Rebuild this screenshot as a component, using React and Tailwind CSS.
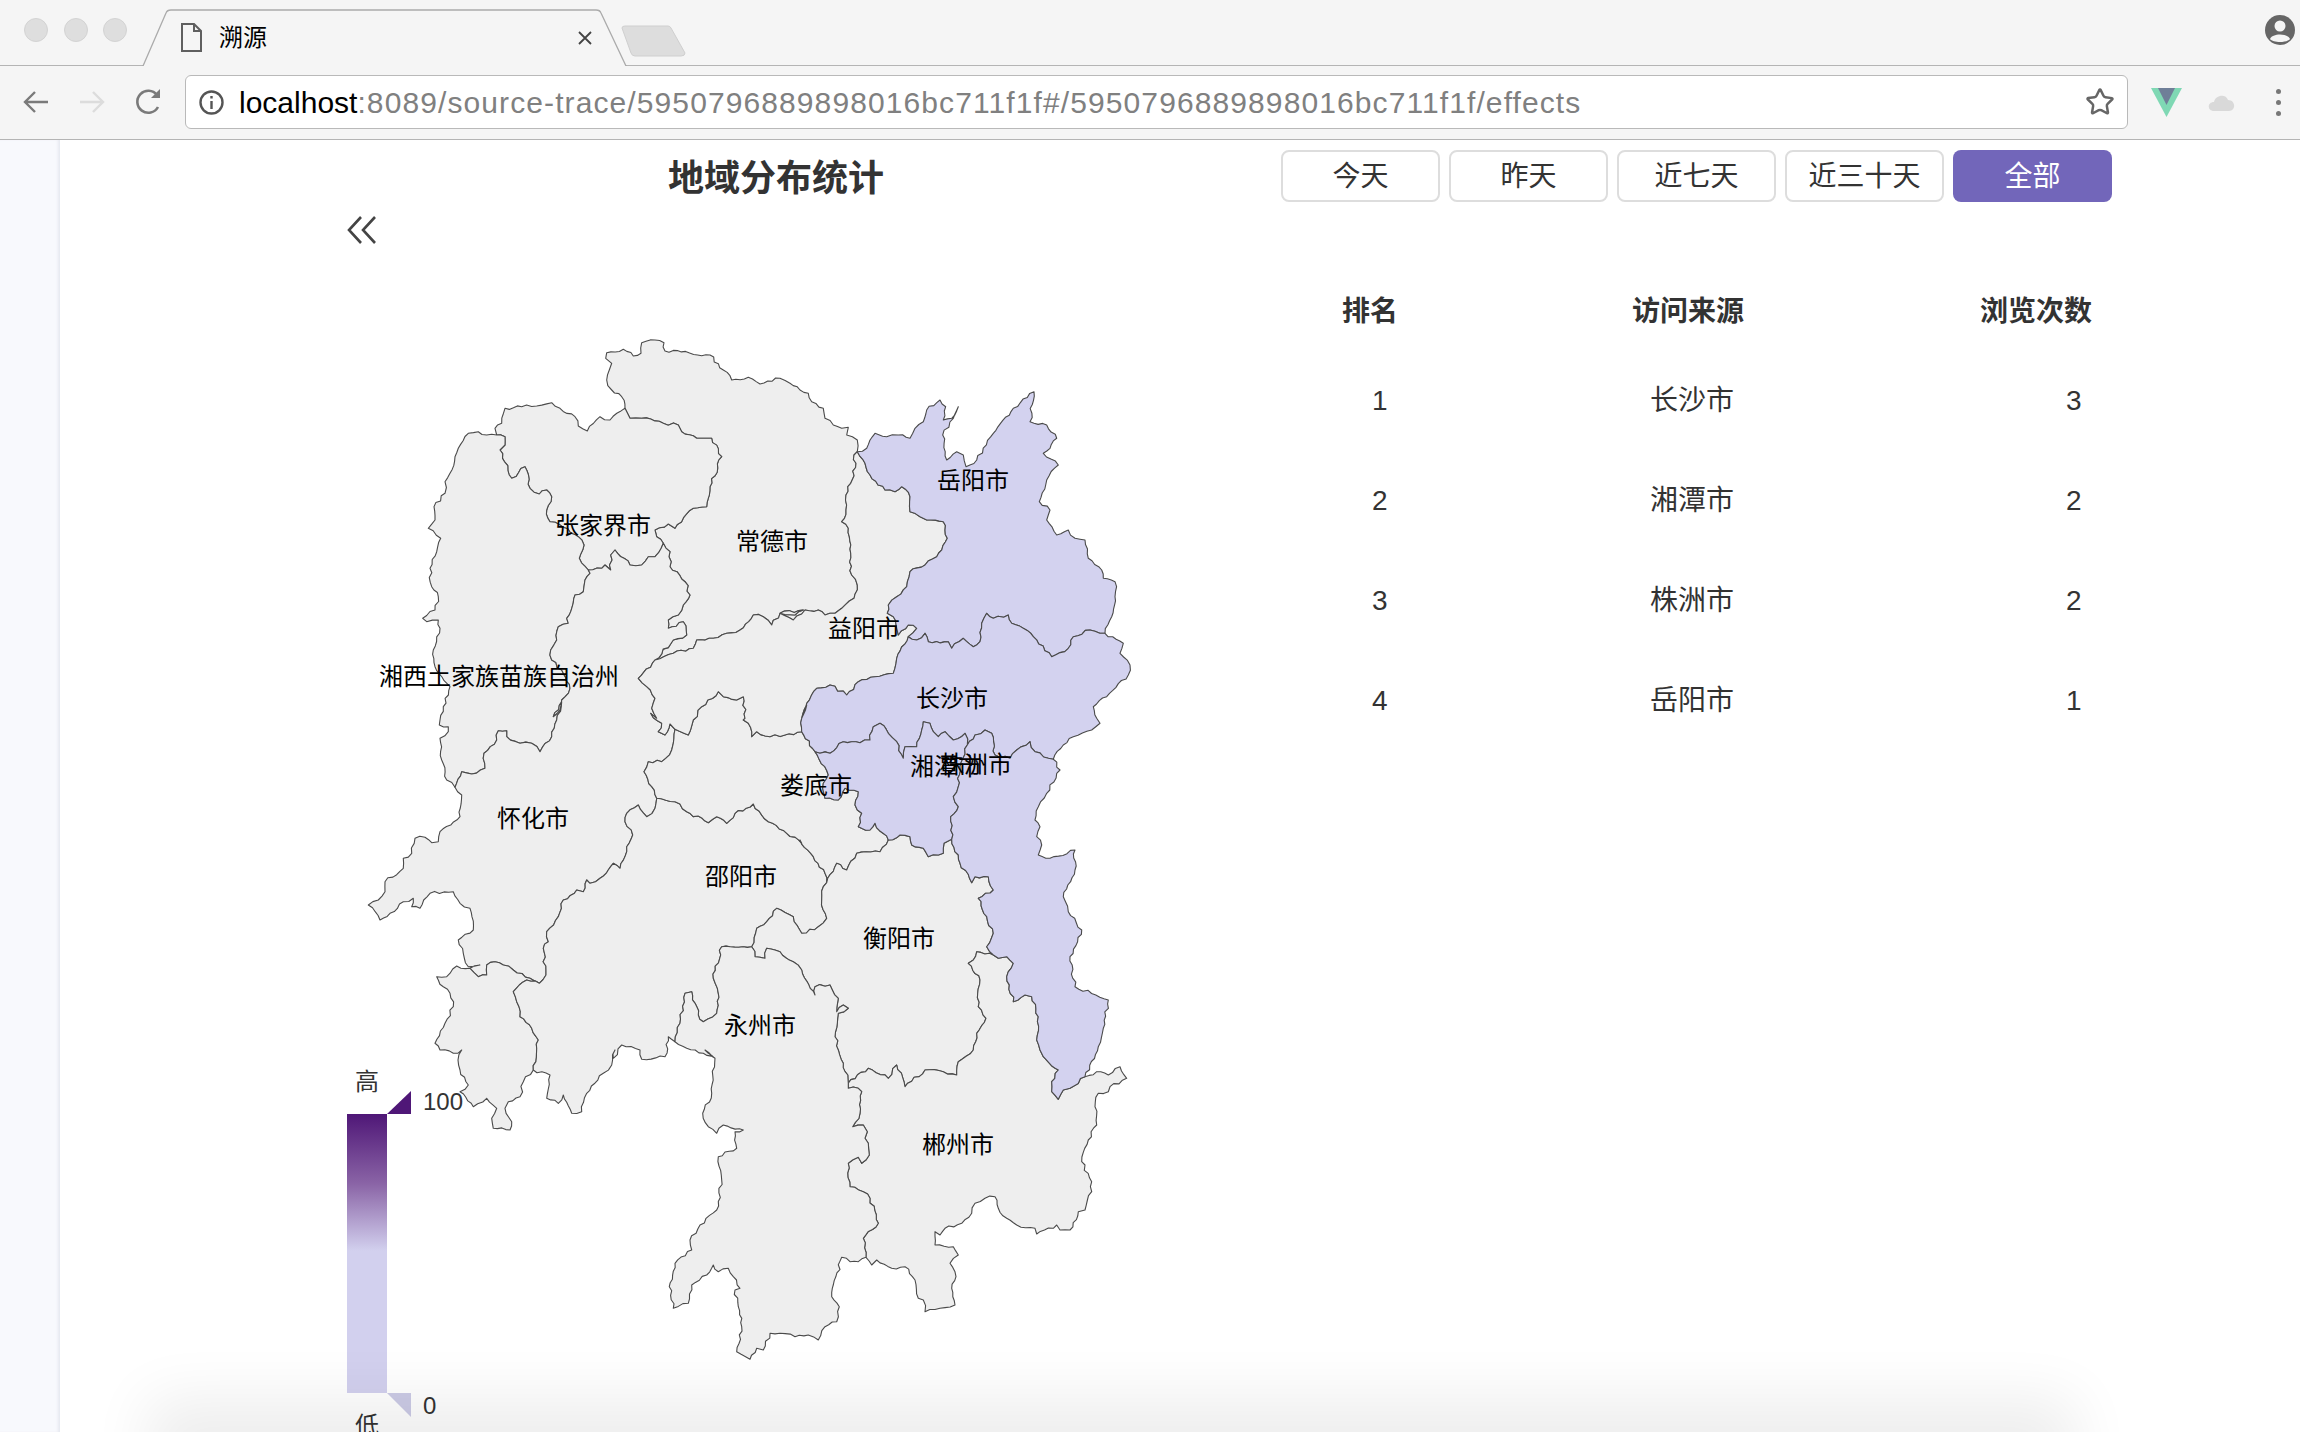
import { Star } from 'lucide-react'

// tile helpers: trace points were read off zoomed crops (3x) of the map
const tile = (ox, oy) => (s) =>
  s.trim().split(/\s+/).map((v) => {
    const [x, y] = v.split(',').map(Number)
    return [ox + x / 3, oy + y / 3]
  })
const A = tile(340, 320)
const Y = tile(780, 320)
const C = tile(340, 700)
const S = tile(780, 700)
const E = tile(780, 1050)
const L = tile(320, 1050)

const traced = {
  changdeOuter: [
    ...A('855,265 845,230 815,210 800,180 808,150 815,130 797,115 800,98 850,88 880,108 903,100 905,68 945,60 972,68 975,93 1110,105 1150,150 1175,180 1225,172 1260,192 1320,175'),
    ...Y('30,190 60,210 85,220 95,245 130,265 135,295 160,315 185,325 205,322 200,345 232,360 232,395'),
  ],
  changdeYiyang: [
    ...Y('232,395 222,405 228,430 212,490 198,525 198,570 185,605 205,625 212,700 215,765 232,795 222,835 185,865 165,880 135,885 115,870 75,870 40,900 0,880'),
    ...A('1390,870 1365,885 1320,880 1295,915 1270,890 1240,885 1200,930 1160,940 1120,955 1070,960 1060,985 1000,1000 945,1020'),
  ],
  changdeHuaihua: A('945,1020 1000,960 1040,945 1030,905 985,925 985,900 1015,885 1030,855 1050,825 1035,785 990,740 990,695 970,670'),
  zjjChangde: A('970,670 950,650 945,630 985,612 1005,625 1060,565 1100,560 1110,500 1145,410 1115,355 1070,355 1025,335 1015,315 970,310 905,295 870,295 855,265'),
  zjjNorth: A('855,265 810,300 780,290 742,333 715,318 705,290 660,265 635,248 590,258 545,260 495,265 485,310 465,325 470,345'),
  zjjXiangxi: A('470,345 495,350 495,375 480,390 515,475 555,440 570,505 598,522 620,510 635,530 620,570 630,605 660,615 715,650 732,675 718,715 745,750'),
  zjjHuaihua: A('745,750 785,745 795,735 812,750 812,705 825,690 870,735 905,735 925,710 945,710 970,670'),
  xxOuter: [
    ...A('470,345 440,345 415,335 385,340 355,385 345,410 330,460 315,485 315,520 282,560 285,600 265,625 302,655 290,695 270,745 275,800 295,830 285,870 248,895 260,905 295,900 300,925 280,990 285,1040 330,1100 310,1160'),
    ...C('300,60 298,75 325,80 325,95 300,115 305,180 320,240 345,262'),
  ],
  xxHuaihua: [
    ...C('345,262 365,215 395,222 435,205 432,160 470,120 475,92 500,92 500,110 540,130 575,130 600,155 635,110 650,60 665,5'),
    ...A('640,1190 660,1170 665,1140 690,1105 665,1050 635,1020 632,990 650,960 655,920 685,910 680,895 705,825 730,815 735,780 750,760 745,750'),
  ],
  yiHuai: [
    ...A('945,1020 895,1075 920,1100 945,1135 935,1165 950,1195'),
    ...C('932,40 965,70 955,95 975,105 990,72 1005,88'),
  ],
  huaiLoudi: C('1005,88 1000,130 995,150 965,185 925,185 912,215 935,260 950,295'),
  huaiShao: C('950,295 945,325 920,350 895,315 860,340 855,365 878,405 860,440 840,505 820,490 780,535 750,550 740,540 730,575 710,570 670,600 655,650 620,695 625,725 610,745 618,825 598,850'),
  huaiSw: C('598,850 570,835 520,810 490,795 465,785 440,795 440,825 415,830 390,805'),
  huaiOuter: C('390,805 420,795 385,800 370,760 355,720 400,690 390,625 360,610 340,575 270,580 240,625 215,620 220,595 190,605 150,640 120,660 85,615 115,600 135,575 135,545 190,505 190,475 215,460 225,415 255,412 275,428 295,425 300,395 360,350 365,285 345,262'),
  swOuter: [
    ...C('390,805 350,798 320,830 290,830 310,860 330,880 340,920 315,970 285,1030 300,1050 340,1060 365,1050 354,1080 360,1110 385,1155'),
    ...L('420,125 460,170 500,145 530,175 515,205 520,235 570,240 575,215 555,175 565,155 600,140 610,95 640,60'),
  ],
  swShao: [
    ...C('598,850 560,840 520,875 530,905 540,950 575,985 595,1020'),
    ...L('640,60'),
  ],
  shaoSouth: [
    ...L('640,60 690,75 680,145 715,160 730,135 755,190 785,185 800,130 850,70 875,45 885,0'),
    ...C('820,1075 845,1035 900,1050 905,1078 975,1070 985,1010 1005,1025'),
  ],
  shaoYong: C('1005,1025 1020,970 1035,880 1055,875 1075,945 1090,965 1130,940 1135,880 1120,835 1145,740 1235,740'),
  shaoHeng: [
    ...C('1235,740 1250,685 1280,665 1310,625 1360,650 1385,700'),
    ...S('115,680 140,655 125,600 130,560 140,548'),
  ],
  shaoLoudi: [
    ...C('950,295 1005,305 1040,335 1105,368 1130,350 1160,370 1185,340 1240,312 1285,365 1340,400 1385,430'),
    ...S('60,420 100,470 135,520 140,548'),
  ],
  loudiHeng: S('140,548 170,490 200,510 230,460 300,455 325,420'),
  loudiXt: S('325,420 285,370 270,390 235,380 245,340 225,315 235,275 195,265 175,300 135,295 130,250 145,225 105,155'),
  loudiCs: S('105,155 65,95'),
  loudiYi: [
    ...C('1005,88 1045,105 1060,60 1085,20'),
    ...A('1135,1115 1150,1130 1190,1140 1210,1130 1215,1195'),
    ...C('1210,60 1225,70 1235,110 1250,95 1290,110 1335,105'),
    ...S('65,95'),
  ],
  csYi: [
    ...S('65,95 65,55 80,15'),
    ...Y('65,1195 80,1150 110,1105 150,1095 200,1125 235,1085 285,1070 340,1060 350,1015 385,950'),
  ],
  yyYi: Y('232,395 255,430 270,465 315,510 345,515 365,500 390,530 390,575 420,590 440,600 490,605 502,655 470,710 435,735 390,755 380,800 350,830 325,855 322,880 340,890 350,925 355,945 385,915 410,925 385,950'),
  yyOuter: Y('232,395 260,385 285,340 320,350 355,345 390,355 405,325 430,305 440,270 480,240 497,260 490,300 515,295 535,260 520,295 488,345 500,420 530,395 550,405 558,440 590,420 640,340 700,265 762,215 750,305 800,315 830,355 810,385 790,400 835,435 800,480 778,545 810,570 800,600 830,645 865,630 885,655 915,660 925,715 965,750 970,775 1005,785 1005,830 995,890 975,940'),
  yyCs: Y('385,950 410,960 435,940 445,965 505,965 515,985 550,955 580,980 600,965 605,910 620,880 640,895 685,885 695,910 730,925 760,950 815,1010 865,985 880,950 930,930 975,940'),
  csOuter: [
    ...Y('975,940 1030,970 1020,1000 1050,1035 1045,1065 980,1130 940,1160 950,1195'),
    ...S('960,70 935,90 880,110 850,135 820,178'),
  ],
  csZz: S('820,178 765,155 750,125 710,150 690,175 645,165 635,100 615,90 585,105 562,135'),
  csXt: S('105,155 150,160 190,125 240,128 270,120 280,80 300,70 325,100 350,125 370,175 375,140 410,140 425,90 430,65 450,70 460,95 475,110 495,95 520,120 555,100 562,135'),
  xtZz: S('562,135 540,200 535,260 520,290 535,320 512,350 515,418'),
  xtHeng: S('325,420 360,405 390,410 395,435 430,445 445,470 490,460 492,430 515,418'),
  zzHeng: S('515,418 540,490 575,548 585,530 625,530 640,570 595,595 620,650 640,700 620,740 640,765'),
  zzOuter: [
    ...S('820,178 840,210 800,280 775,320 765,360 780,380 770,410 785,435 775,465 810,475 885,450 885,510 850,590 865,635 905,690 870,770 885,860 985,900 970,985 955,1040'),
    ...E('915,80'),
  ],
  zzCz: [
    ...E('915,80 870,115 850,120 835,148 815,125 815,95 835,60 790,20 780,0'),
    ...S('770,1020 775,950 755,890 735,885 700,905 680,830 700,790 680,770 655,775 640,765'),
  ],
  hengCz: S('640,765 590,755 580,780 565,790 600,840 595,920 618,955 590,1000 580,1050 535,1085 530,1125 490,1115 435,1110 375,1160 350,1095 325,1135 265,1105 205,1150'),
  hengYong: [
    ...S('205,1150 190,1090 165,1010 175,940 205,925 190,915 170,935 175,895 150,855 105,860 105,885'),
    ...C('1385,810 1360,785 1320,755 1305,750 1280,745 1275,775 1245,770 1235,740'),
  ],
  czOuter: E('915,80 950,65 985,75 1020,50 1040,85 990,110 985,125 955,130 945,170 950,225 925,270 905,335 935,395 935,425 915,480 895,485 870,540 840,540 830,525 770,552 765,535 710,525 680,505 655,475 645,440 615,445 585,460 575,490 545,520 495,535 480,555 465,545 465,585 520,590 535,615 510,640 528,680 515,715 525,765 480,775 435,785 430,750 415,745 405,690 375,650 335,655 290,630 275,645 258,622'),
  czYong: E('258,622 250,565 295,520 270,445 250,425 210,410 205,340 235,322 245,340 268,315 265,280 255,265 262,245 250,225 218,230 240,190 245,125 235,115 205,115 205,100'),
  yongOuter: [
    ...E('258,622 235,635 210,635 185,622 155,740 178,770 170,815 135,830 115,870 85,855 45,860 0,850'),
    ...L('1350,850 1330,900 1310,895 1290,928 1250,905 1265,830 1255,770 1245,720 1260,715 1240,680 1225,655 1195,665 1180,645 1160,675 1115,705 1105,760 1060,775 1048,710 1065,640 1115,600 1110,570 1140,525 1190,480 1205,390 1195,320 1250,295 1245,245 1270,240 1210,225 1190,250 1165,230 1148,190 1175,130 1185,25 1155,0'),
    ...C('1125,1075 1090,1060 1040,1045 1005,1025'),
  ],
}

// the real borders are wigglier than the trace, so break long edges up a little
const noise = (x, y) => {
  const v = Math.sin(x * 12.9898 + y * 78.233) * 43758.5453
  return (v - Math.floor(v)) * 2 - 1
}
const roughen = (pts) => {
  const out = [pts[0]]
  for (let i = 1; i < pts.length; i++) {
    const [x0, y0] = pts[i - 1]
    const [x1, y1] = pts[i]
    const len = Math.hypot(x1 - x0, y1 - y0)
    const steps = Math.floor(len / 4)
    for (let k = 1; k < steps; k++) {
      const t = k / steps
      const x = x0 + (x1 - x0) * t
      const y = y0 + (y1 - y0) * t
      const n = noise(x, y) * 1.6
      out.push([x - ((y1 - y0) / len) * n, y + ((x1 - x0) / len) * n])
    }
    out.push(pts[i])
  }
  return out
}
const b = Object.fromEntries(Object.entries(traced).map(([k, v]) => [k, roughen(v)]))

const r = (pts) => [...pts].reverse()
const loop = (...parts) => 'M' + parts.flat().map(([x, y]) => `${x.toFixed(1)} ${y.toFixed(1)}`).join('L') + 'Z'

const regions = [
  { fill: false, d: loop(b.changdeOuter, b.changdeYiyang, b.changdeHuaihua, b.zjjChangde) },
  { fill: false, d: loop(b.zjjNorth, b.zjjXiangxi, b.zjjHuaihua, b.zjjChangde) },
  { fill: false, d: loop(b.xxOuter, b.xxHuaihua, r(b.zjjXiangxi)) },
  { fill: false, d: loop(b.zjjHuaihua, r(b.changdeHuaihua), b.yiHuai, b.huaiLoudi, b.huaiShao, b.huaiSw, b.huaiOuter, b.xxHuaihua) },
  { fill: false, d: loop(r(b.huaiSw), b.swShao, r(b.swOuter)) },
  { fill: false, d: loop(b.huaiShao, b.swShao, b.shaoSouth, b.shaoYong, b.shaoHeng, r(b.shaoLoudi)) },
  { fill: false, d: loop(b.huaiLoudi, b.shaoLoudi, b.loudiHeng, b.loudiXt, b.loudiCs, r(b.loudiYi)) },
  { fill: false, d: loop(b.changdeYiyang, b.yiHuai, b.loudiYi, b.csYi, r(b.yyYi)) },
  { fill: false, d: loop(b.loudiHeng, b.xtHeng, b.zzHeng, b.hengCz, b.hengYong, b.shaoHeng) },
  { fill: false, d: loop(b.czOuter, b.czYong, r(b.hengCz), r(b.zzCz)) },
  { fill: false, d: loop(b.shaoYong, r(b.hengYong), r(b.czYong), b.yongOuter) },
  { fill: true, d: loop(b.yyOuter, r(b.yyCs), r(b.yyYi)) },
  { fill: true, d: loop(b.yyCs, b.csOuter, b.csZz, r(b.csXt), b.loudiCs, b.csYi) },
  { fill: true, d: loop(b.csXt, b.xtZz, r(b.xtHeng), b.loudiXt) },
  { fill: true, d: loop(r(b.csZz), b.zzOuter, b.zzCz, r(b.zzHeng), r(b.xtZz)) },
]

const labels = [
  ['张家界市', 603, 525],
  ['常德市', 772, 541],
  ['岳阳市', 973, 480],
  ['益阳市', 864, 628],
  ['湘西土家族苗族自治州', 499, 676],
  ['长沙市', 952, 698],
  ['湘潭市', 946, 766],
  ['株洲市', 976, 764],
  ['娄底市', 816, 785],
  ['怀化市', 533, 818],
  ['邵阳市', 741, 876],
  ['衡阳市', 899, 938],
  ['永州市', 760, 1025],
  ['郴州市', 958, 1144],
]

const ranks = [
  { n: 1, city: '长沙市', views: 3 },
  { n: 2, city: '湘潭市', views: 2 },
  { n: 3, city: '株洲市', views: 2 },
  { n: 4, city: '岳阳市', views: 1 },
]

const ranges = ['今天', '昨天', '近七天', '近三十天', '全部']

function MapChart() {
  return (
    <svg viewBox="347 260 858 1172" width="858" height="1172" className="block overflow-visible">
      <defs>
        <linearGradient id="legend" x1="0" y1="0" x2="0" y2="1">
          <stop offset="0" stopColor="#4f1777" />
          <stop offset="0.25" stopColor="#8a64a6" />
          <stop offset="0.49" stopColor="#d2d0ee" />
          <stop offset="1" stopColor="#d2d0ee" />
        </linearGradient>
      </defs>
      {regions.map((reg, i) => (
        <path key={i} d={reg.d} fill={reg.fill ? '#d3d2ef' : '#eeeeee'} stroke="#4a4a4a" strokeWidth="1.1" strokeLinejoin="round" />
      ))}
      {labels.map(([t, x, y]) => (
        <text key={t} x={x} y={y} textAnchor="middle" dominantBaseline="central" fontSize="24" fill="#000">
          {t}
        </text>
      ))}
      {/* visual map legend */}
      <rect x="347" y="1114" width="40" height="279" fill="url(#legend)" />
      <path d="M387 1114L411 1091V1114Z" fill="#4f1777" />
      <path d="M387 1393H411V1417Z" fill="#cccbe6" />
      <text x="367" y="1081" textAnchor="middle" dominantBaseline="central" fontSize="24" fill="#333">高</text>
      <text x="367" y="1425" textAnchor="middle" dominantBaseline="central" fontSize="24" fill="#333">低</text>
      <text x="423" y="1101" dominantBaseline="central" fontSize="24" fill="#333">100</text>
      <text x="423" y="1405" dominantBaseline="central" fontSize="24" fill="#333">0</text>
    </svg>
  )
}

function TabStrip() {
  return (
    <div className="flex h-[66px] border-b border-[#b4b4b4] bg-[#f5f5f5] pl-6 pr-[5px]">
      <div className="flex h-[60px] items-center gap-[15.5px] pb-[1px]">
        <span className="h-6 w-6 rounded-full border border-[#d3d3d3] bg-[#dedede]" />
        <span className="h-6 w-6 rounded-full border border-[#d3d3d3] bg-[#dedede]" />
        <span className="h-6 w-6 rounded-full border border-[#d3d3d3] bg-[#dedede]" />
      </div>
      {/* active tab */}
      <div className="relative z-10 ml-[15px] mt-[9px] flex h-[57px] w-[485px] items-center pl-[39px] pr-[34px]">
        <svg className="absolute left-0 top-0" width="485" height="57" viewBox="0 0 485 57">
          <path d="M0 57H1L24 4Q25 1 29 1H454Q458 1 459 4L484 57H485" fill="#f5f5f5" stroke="#ababab" strokeWidth="1.3" />
        </svg>
        <svg className="relative" width="21" height="29" viewBox="0 0 21 29" fill="none" stroke="#5f5f5f" strokeWidth="2">
          <path d="M1 1H13L20 8V28H1ZM13 1V8H20" />
        </svg>
        <span className="relative ml-[17px] text-2xl text-black">溯源</span>
        <svg className="relative ml-auto" width="16" height="16" viewBox="0 0 16 16" stroke="#444" strokeWidth="1.8">
          <path d="M2 2L14 14M14 2L2 14" />
        </svg>
      </div>
      <svg className="-ml-[6px] mt-[25px]" width="65" height="32" viewBox="0 0 65 32">
        <path d="M1 3Q1 1 4 1H47Q49 1 50 3L64 28Q64 31 60 31H14Q11 31 10 28Z" fill="#dddddd" stroke="#cfcfcf" />
      </svg>
      <svg className="ml-auto mt-[15px]" width="30" height="30" viewBox="0 0 30 30">
        <circle cx="15" cy="15" r="15" fill="#666" />
        <circle cx="15" cy="11" r="5.5" fill="#f5f5f5" />
        <path d="M5 24C7 18 23 18 25 24C22 28 8 28 5 24Z" fill="#f5f5f5" />
      </svg>
    </div>
  )
}

function Toolbar() {
  return (
    <div className="flex h-[74px] items-center border-b border-[#b4b4b4] bg-[#f5f5f5] pb-[1px] pl-[23px]">
      <svg width="26" height="26" viewBox="0 0 26 26" fill="none" stroke="#7a7a7a" strokeWidth="2.4">
        <path d="M25 13H2M12 3L2 13L12 23" />
      </svg>
      <svg className="ml-[30px]" width="26" height="26" viewBox="0 0 26 26" fill="none" stroke="#dcdcdc" strokeWidth="2.4">
        <path d="M1 13H24M14 3L24 13L14 23" />
      </svg>
      <svg className="ml-[30px]" width="28" height="28" viewBox="0 0 28 28" fill="none" stroke="#7a7a7a" strokeWidth="2.6">
        <path d="M23 19A11 11 0 1 1 22 7" />
        <path d="M25 1V10H16Z" fill="#7a7a7a" stroke="none" />
      </svg>
      <div className="ml-[22px] flex h-[54px] w-[1943px] items-center rounded-[6px] border border-[#b9b9b9] bg-white pl-[13px] pr-[12px]">
        <svg width="25" height="25" viewBox="0 0 25 25" fill="none" stroke="#555" strokeWidth="2.4">
          <circle cx="12.5" cy="12.5" r="11" />
          <path d="M12.5 11V19M12.5 6V8.6" />
        </svg>
        <span className="ml-[15px] whitespace-nowrap text-[30px] tracking-[1.1px] text-[#808080]">
          <span className="tracking-normal text-black">localhost</span>:8089/source-trace/5950796889898016bc711f1f#/5950796889898016bc711f1f/effects
        </span>
        <Star size={30} strokeWidth={2} className="ml-auto text-[#666]" />
      </div>
      <svg className="ml-[23px]" width="31" height="29" viewBox="0 0 31 29">
        <path d="M0 0H31L15.5 29Z" fill="#7fd8b4" />
        <path d="M7 0H24L15.5 17Z" fill="#6f7f98" />
      </svg>
      <svg className="ml-[26px]" width="28" height="20" viewBox="0 0 28 20">
        <path d="M6 19C-1 19-1 10 6 10C7 3 18 1 20 8C28 8 28 19 21 19Z" fill="#d9d9d9" />
      </svg>
      <div className="ml-[40px] flex flex-col gap-[6px]">
        <span className="h-[5px] w-[5px] rounded-full bg-[#777]" />
        <span className="h-[5px] w-[5px] rounded-full bg-[#777]" />
        <span className="h-[5px] w-[5px] rounded-full bg-[#777]" />
      </div>
    </div>
  )
}

export default function App() {
  return (
    <div className="flex h-[1432px] w-[2300px] flex-col overflow-hidden bg-white font-['Liberation_Sans','Noto_Sans_CJK_SC',sans-serif] text-[#333]">
      <TabStrip />
      <Toolbar />

      <div className="relative flex flex-1 overflow-hidden">
        {/* Sidebar edge */}
        <div className="w-[60px] shrink-0 bg-[#f8f9fd] shadow-[inset_-3px_0_3px_-1px_#e6e8f0]" />

        {/* Map column */}
        <div className="w-[1221px] shrink-0 pl-[287px]">
          <div className="w-[858px]">
            <h1 className="mt-[13px] h-[52px] text-center text-[36px] font-bold leading-[52px]">地域分布统计</h1>
            <svg className="mt-[11px] block" width="30" height="28" viewBox="0 0 30 28" fill="none" stroke="#444" strokeWidth="2.6">
              <path d="M14 1L2 14L14 27M28 1L16 14L28 27" />
            </svg>
            <div className="mt-[16px]">
              <MapChart />
            </div>
          </div>
        </div>

        {/* Range buttons + ranking */}
        <div className="w-[831px] shrink-0">
          <div className="mt-[10px] flex gap-[9px]">
            {ranges.map((t) => (
              <button
                key={t}
                className={
                  t === '全部'
                    ? 'h-[52px] w-[159px] rounded-[8px] bg-[#7266ba] pt-[2px] text-[28px] text-white'
                    : 'h-[52px] w-[159px] rounded-[8px] border-2 border-[#dddddd] bg-white pt-[2px] text-[28px] text-[#333]'
                }
              >
                {t}
              </button>
            ))}
          </div>

          <div className="mt-[80px] grid h-[60px] grid-cols-[300px_300px_1fr] items-center text-[28px] font-bold">
            <div className="pl-[61px]">排名</div>
            <div className="pl-[51px]">访问来源</div>
            <div className="pl-[99px]">浏览次数</div>
          </div>
          <div className="mt-[9px]">
            {ranks.map((row) => (
              <div key={row.n} className="grid h-[100px] grid-cols-[300px_300px_1fr] items-center text-[28px]">
                <div className="pl-[91px]">{row.n}</div>
                <div className="pl-[69px]">{row.city}</div>
                <div className="pl-[185px]">{row.views}</div>
              </div>
            ))}
          </div>
        </div>

        {/* bottom fade, sits over the page */}
        <div className="pointer-events-none absolute bottom-[-60px] left-[182px] right-[259px] h-[60px] shadow-[0_0_60px_34px_rgba(0,0,0,0.07)]" />
      </div>
    </div>
  )
}
